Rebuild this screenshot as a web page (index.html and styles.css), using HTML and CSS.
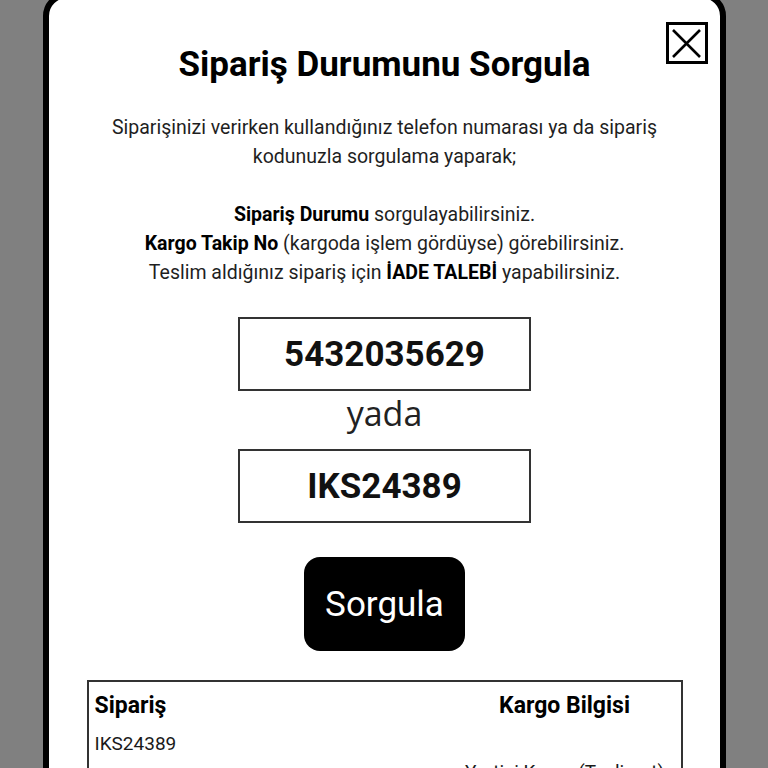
FILE: index.html
```html
<!DOCTYPE html>
<html lang="tr">
<head>
<meta charset="utf-8">
<title>Sipariş Durumunu Sorgula</title>
<link rel="stylesheet" href="styles.css">
</head>
<body>
<div class="modal">
  <button class="close" aria-label="Kapat">
    <svg viewBox="0 0 35 35" width="35" height="35"><path d="M4 4 L31 31 M31 4 L4 31" stroke="#000" stroke-width="2.6" fill="none"/></svg>
  </button>
  <h1 class="title">Sipariş Durumunu Sorgula</h1>
  <p class="intro">Siparişinizi verirken kullandığınız telefon numarası ya da sipariş kodunuzla sorgulama yaparak;<br><br><b>Sipariş Durumu</b> sorgulayabilirsiniz.<br><b>Kargo Takip No</b> (kargoda işlem gördüyse) görebilirsiniz.<br>Teslim aldığınız sipariş için <b>İADE TALEBİ</b> yapabilirsiniz.</p>
  <div class="field">5432035629</div>
  <div class="or">yada</div>
  <div class="field">IKS24389</div>
  <button class="submit">Sorgula</button>
  <div class="result">
    <div class="head">Sipariş</div>
    <div class="head head-right">Kargo Bilgisi</div>
    <div class="cell">IKS24389</div>
    <div class="cell cell-right">Yurtiçi Kargo (Teslimat)</div>
  </div>
</div>
</body>
</html>
```

FILE: styles.css
```css
html, body {
  margin: 0;
  padding: 0;
  background: #808080;
  height: 768px;
  overflow: hidden;
}
body {
  font-family: Roboto, "Liberation Sans", sans-serif;
  color: #111;
}
.modal {
  position: relative;
  box-sizing: border-box;
  width: 683px;
  margin: -8px auto 0;
  min-height: 900px;
  background: #fff;
  border: 6px solid #000;
  border-radius: 24px;
  padding: 47px 37px 0 38px;
  display: flex;
  flex-direction: column;
  align-items: center;
}
.close {
  position: absolute;
  top: 24px;
  right: 12px;
  width: 42px;
  height: 42px;
  box-sizing: border-box;
  border: 3px solid #000;
  background: #fff;
  padding: 0;
  margin: 0;
  display: flex;
  align-items: center;
  justify-content: center;
}
.close svg { display: block; }
.title {
  margin: 0;
  font-size: 35px;
  line-height: 40px;
  font-weight: 700;
  color: #000;
  text-align: center;
}
.intro {
  margin: 28px 0 0;
  font-size: 19.5px;
  line-height: 29px;
  text-align: center;
  color: #1f1f1f;
  max-width: 600px;
}
.intro b { font-weight: 700; color: #000; }
.field {
  box-sizing: border-box;
  width: 293px;
  height: 74px;
  border: 2px solid #333;
  display: flex;
  align-items: center;
  justify-content: center;
  font-size: 35px;
  font-weight: 700;
  color: #111;
  margin-top: 30px;
}
.or {
  height: 58px;
  line-height: 45px;
  font-family: "Open Sans", Lato, sans-serif;
  font-weight: 400;
  font-size: 34px;
  color: #222;
}
.or + .field { margin-top: 0; }
.submit {
  margin-top: 34px;
  width: 161px;
  height: 94px;
  border: none;
  border-radius: 16px;
  background: #000;
  color: #fff;
  font-family: Roboto, "Liberation Sans", sans-serif;
  font-size: 35px;
  font-weight: 400;
  padding: 0;
}
.result {
  margin-top: 29px;
  box-sizing: border-box;
  width: 596px;
  border: 2px solid #333;
  display: grid;
  grid-template-columns: 1fr 232px;
  padding: 8px 0 0 6px;
}
.head {
  font-size: 23px;
  line-height: 32px;
  font-weight: 700;
  color: #000;
}
.head-right { text-align: center; }
.cell {
  font-size: 19px;
  line-height: 24px;
  margin-top: 10px;
  color: #1a1a1a;
}
.cell-right {
  text-align: center;
  white-space: nowrap;
  margin-top: 38px;
}
```
